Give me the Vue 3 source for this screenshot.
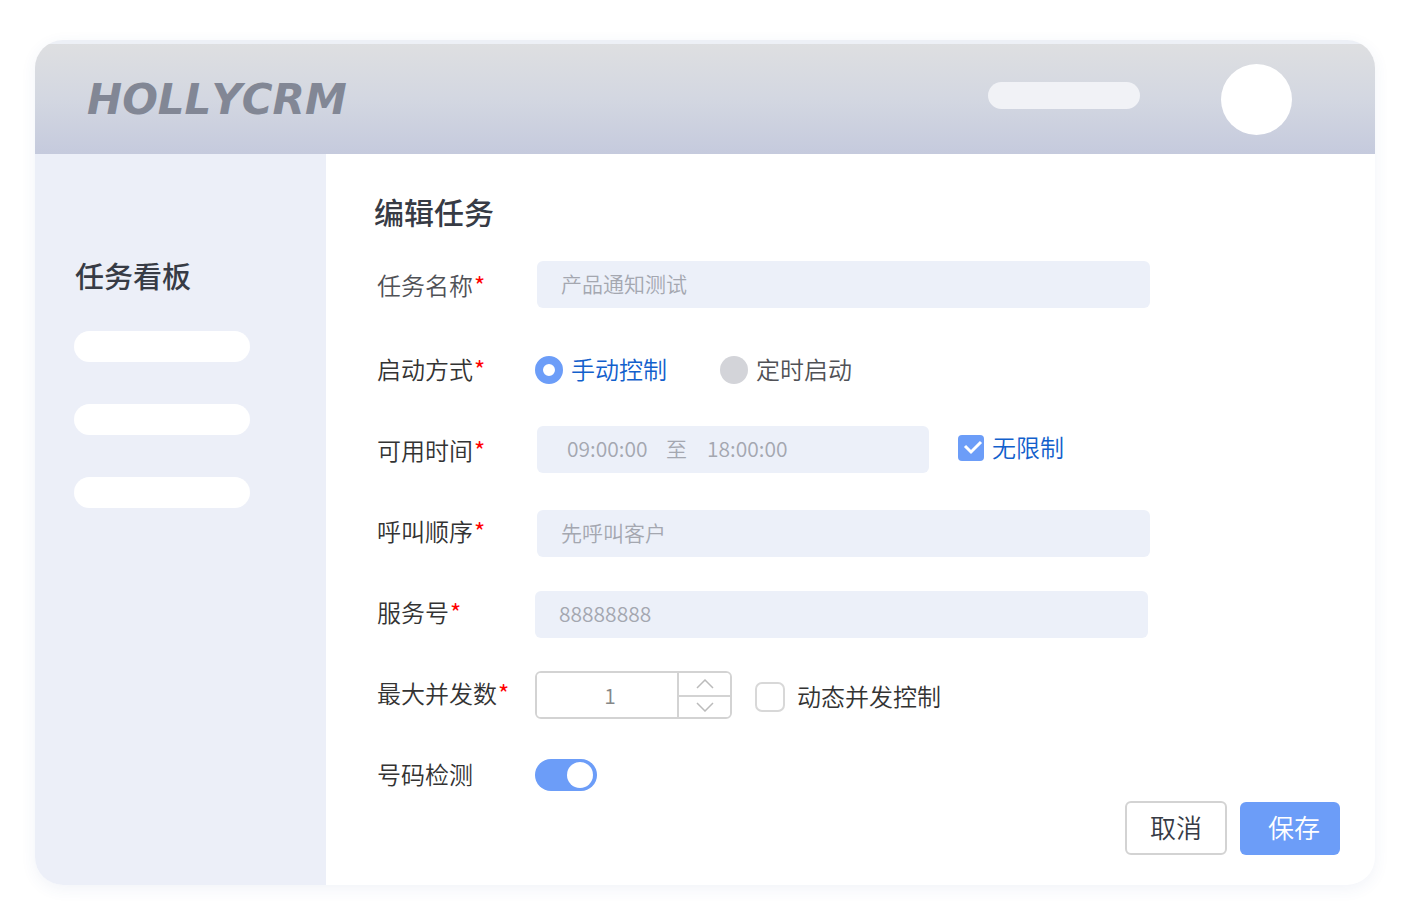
<script setup>
import { ref } from 'vue'

const taskName = ref('产品通知测试')
const startMode = ref('manual')
const startTime = ref('09:00:00')
const endTime = ref('18:00:00')
const unlimited = ref(true)
const callOrder = ref('先呼叫客户')
const serviceNumber = ref('88888888')
const maxConcurrent = ref(1)
const dynamicControl = ref(false)
const numberCheck = ref(true)

function step(delta) {
  maxConcurrent.value = Math.max(1, Number(maxConcurrent.value) + delta)
}
</script>

<template>
  <div class="card">
    <header class="topbar">
      <div class="logo">HOLLYCRM</div>
      <div class="topbar-pill"></div>
      <div class="avatar"></div>
    </header>

    <div class="body">
      <aside class="sidebar">
        <h2 class="sidebar-title">任务看板</h2>
        <div class="sidebar-items">
          <div class="sidebar-pill"></div>
          <div class="sidebar-pill"></div>
          <div class="sidebar-pill"></div>
        </div>
      </aside>

      <main class="main">
        <h1 class="title">编辑任务</h1>

        <form class="form" @submit.prevent>
          <div class="row row-first">
            <label class="label label-soft" for="task-name">任务名称<span class="star">*</span></label>
            <input id="task-name" v-model="taskName" class="field top" type="text" />
          </div>

          <div class="row narrow" role="radiogroup" aria-labelledby="mode-label">
            <span id="mode-label" class="label">启动方式<span class="star">*</span></span>
            <label class="choice blue">
              <input v-model="startMode" class="radio" type="radio" name="mode" value="manual" />
              <span class="choice-text">手动控制</span>
            </label>
            <label class="choice choice-next">
              <input v-model="startMode" class="radio" type="radio" name="mode" value="timed" />
              <span class="choice-text">定时启动</span>
            </label>
          </div>

          <div class="row">
            <label class="label" for="start-time">可用时间<span class="star">*</span></label>
            <div class="range top">
              <input id="start-time" v-model="startTime" class="time" type="text" />
              <label class="to" for="end-time">至</label>
              <input id="end-time" v-model="endTime" class="time" type="text" />
            </div>
            <label class="choice blue unlimited top">
              <span class="check-wrap">
                <input v-model="unlimited" class="check" type="checkbox" />
                <svg class="tick" viewBox="0 0 26 26" aria-hidden="true">
                  <path d="M7 11l6 6L23 7" fill="none" stroke="#fff" stroke-width="3" />
                </svg>
              </span>
              <span class="choice-text">无限制</span>
            </label>
          </div>

          <div class="row">
            <label class="label" for="order">呼叫顺序<span class="star">*</span></label>
            <input id="order" v-model="callOrder" class="field bottom" type="text" />
          </div>

          <div class="row narrow">
            <label class="label" for="service">服务号<span class="star">*</span></label>
            <input id="service" v-model="serviceNumber" class="field bottom" type="text" />
          </div>

          <div class="row narrow">
            <label class="label" for="max">最大并发数<span class="star">*</span></label>
            <div class="stepper bottom">
              <input id="max" v-model="maxConcurrent" class="stepper-input" type="text" />
              <div class="stepper-buttons">
                <button type="button" aria-label="增加" @click="step(1)">
                  <svg viewBox="0 0 18 10" aria-hidden="true"><path d="M1 9l8-8 8 8" /></svg>
                </button>
                <button type="button" aria-label="减少" @click="step(-1)">
                  <svg viewBox="0 0 18 10" aria-hidden="true"><path d="M1 1l8 8 8-8" /></svg>
                </button>
              </div>
            </div>
            <label class="choice dynamic bottom">
              <input v-model="dynamicControl" class="box" type="checkbox" />
              <span class="choice-text">动态并发控制</span>
            </label>
          </div>

          <div class="row narrow">
            <label class="label" for="number-check">号码检测</label>
            <input id="number-check" v-model="numberCheck" class="switch" type="checkbox" role="switch" />
          </div>

          <div class="actions">
            <button class="btn cancel" type="button">取消</button>
            <button class="btn save" type="submit">保存</button>
          </div>
        </form>
      </main>
    </div>
  </div>
</template>

<style>
body {
  background: #fff;
}
</style>

<style scoped>
* {
  box-sizing: border-box;
}

.card {
  display: flex;
  flex-direction: column;
  min-height: calc(100vh - 76px);
  margin: 40px 41px 36px 35px;
  overflow: hidden;
  border-radius: 28px;
  background: #fff;
  box-shadow: 0 4px 16px rgba(60, 90, 150, 0.07);
  color: #333;
  font-family: "Noto Sans CJK SC", sans-serif;
  font-size: 24px;
  font-weight: 350;
}

input,
button {
  margin: 0;
  font-family: inherit;
  font-weight: inherit;
}

.topbar {
  display: flex;
  align-items: center;
  height: 114px;
  padding: 0 83px 0 52px;
  border-top: 4px solid #edf0f6;
  background: linear-gradient(#dedfe1, #d3d7e1 50%, #c5cadd);
}

.logo {
  margin-right: auto;
  padding-top: 2px;
  color: #828795;
  font-family: "DejaVu Sans", sans-serif;
  font-size: 42px;
  font-style: italic;
  font-weight: 700;
  font-kerning: none;
  line-height: 48px;
}

.topbar-pill {
  width: 152px;
  height: 27px;
  margin: 0 81px 8px 0;
  border-radius: 14px;
  background: #f1f2f6;
}

.avatar {
  width: 71px;
  height: 71px;
  border-radius: 50%;
  background: #fff;
}

.body {
  display: flex;
  flex: 1;
}

.sidebar {
  flex: none;
  width: 291px;
  padding: 99px 0 0 39px;
  background: #eceff8;
}

.sidebar-title {
  margin: 0 0 34px;
  padding-left: 1px;
  color: #373b45;
  font-size: 29px;
  font-weight: 500;
  line-height: 44px;
}

.sidebar-items {
  display: grid;
  gap: 42px;
}

.sidebar-pill {
  width: 176px;
  height: 31px;
  border-radius: 16px;
  background: #fff;
}

.main {
  flex: 1;
  padding: 35px 35px 30px 51px;
}

.title {
  margin: 0 0 28px -3px;
  color: #373b45;
  font-size: 30px;
  font-weight: 500;
  line-height: 44px;
}

.form {
  display: flex;
  flex-direction: column;
}

.row {
  display: flex;
  align-items: center;
  height: 50px;
  margin: 0 190px 31px 0;
}

.row.narrow {
  margin-right: 192px;
}

.row-first {
  margin-bottom: 34px;
}

.label {
  flex: none;
  width: 160px;
  padding-bottom: 2px;
  line-height: 36px;
  white-space: nowrap;
}

.narrow .label {
  width: 158px;
}

.label-soft {
  color: #505156;
}

.star {
  padding-left: 1px;
  color: #f00;
  font-weight: 400;
}

.top {
  align-self: flex-start;
}

.bottom {
  align-self: flex-end;
}

.field,
.range {
  height: 47px;
  border: 0;
  border-radius: 6px;
  background: #ecf0f9;
  color: #a4a7b0;
  font-size: 21px;
}

.field {
  flex: 1;
  min-width: 0;
  padding: 0 24px 3px;
}

.range {
  display: flex;
  align-items: center;
  gap: 16px;
  width: 392px;
  padding: 0 30px 3px;
}

.time {
  width: 83px;
  padding: 0;
  border: 0;
  background: transparent;
  color: inherit;
  font-size: 21px;
}

.to {
  margin-right: 4px;
}

.choice {
  display: flex;
  align-items: center;
  gap: 8px;
  line-height: 36px;
  white-space: nowrap;
}

.choice-text {
  padding-bottom: 3px;
}

.choice-next {
  margin-left: 53px;
  color: #505156;
}

.blue {
  color: #1260cc;
}

.radio {
  width: 28px;
  height: 28px;
  border-radius: 50%;
  background: #d3d4d9;
  appearance: none;
}

.radio:checked {
  border: 8px solid #6c9df8;
  background: #fff;
}

.unlimited {
  height: 44px;
  margin-left: 29px;
}

.check-wrap {
  position: relative;
  width: 26px;
  height: 26px;
}

.check {
  display: block;
  width: 26px;
  height: 26px;
  border: 1px solid #d0d0d0;
  border-radius: 4px;
  appearance: none;
}

.check:checked {
  border: 0;
  background: #6c9df8;
}

.tick {
  position: absolute;
  inset: 0;
  pointer-events: none;
}

.check:not(:checked) + .tick {
  display: none;
}

.stepper {
  display: flex;
  width: 197px;
  height: 48px;
  overflow: hidden;
  border: 2px solid #d3d3d3;
  border-radius: 6px;
}

.stepper-input {
  flex: 1;
  min-width: 0;
  padding: 0 0 0 6px;
  border: 0;
  background: #fff;
  color: #868788;
  font-size: 21px;
  text-align: center;
}

.stepper-buttons {
  display: grid;
  grid-template-rows: 1fr 1fr;
  width: 53px;
  border-left: 2px solid #d3d3d3;
}

.stepper-buttons button {
  display: grid;
  place-items: center;
  padding: 0;
  border: 0;
  background: #fff;
}

.stepper-buttons button + button {
  border-top: 2px solid #d3d3d3;
}

.stepper-buttons svg {
  width: 18px;
  height: 10px;
  fill: none;
  stroke: #bbb;
  stroke-width: 1.5;
}

.dynamic {
  gap: 12px;
  height: 44px;
  margin-left: 23px;
}

.box {
  width: 30px;
  height: 30px;
  border: 2px solid #d8d8d8;
  border-radius: 7px;
  background: #fff;
  appearance: none;
}

.box:checked {
  background: #6c9df8;
}

.switch {
  display: flex;
  width: 62px;
  height: 32px;
  padding: 3px 4px;
  border-radius: 16px;
  background: #d3d4d9;
  appearance: none;
}

.switch::before {
  width: 26px;
  height: 26px;
  border-radius: 50%;
  background: #fff;
  content: "";
}

.switch:checked {
  justify-content: flex-end;
  background: #6c9df8;
}

.actions {
  display: flex;
  align-items: flex-end;
  justify-content: flex-end;
  gap: 13px;
  margin-top: -30px;
}

.btn {
  height: 53px;
  border-radius: 6px;
  font-size: 26px;
  line-height: 40px;
}

.cancel {
  width: 102px;
  height: 54px;
  padding: 0 0 2px;
  border: 2px solid #d3d3d3;
  background: #fff;
  color: #373b45;
}

.save {
  width: 100px;
  padding: 0 0 3px 8px;
  border: 0;
  background: #6c9df8;
  color: #fff;
}
</style>
